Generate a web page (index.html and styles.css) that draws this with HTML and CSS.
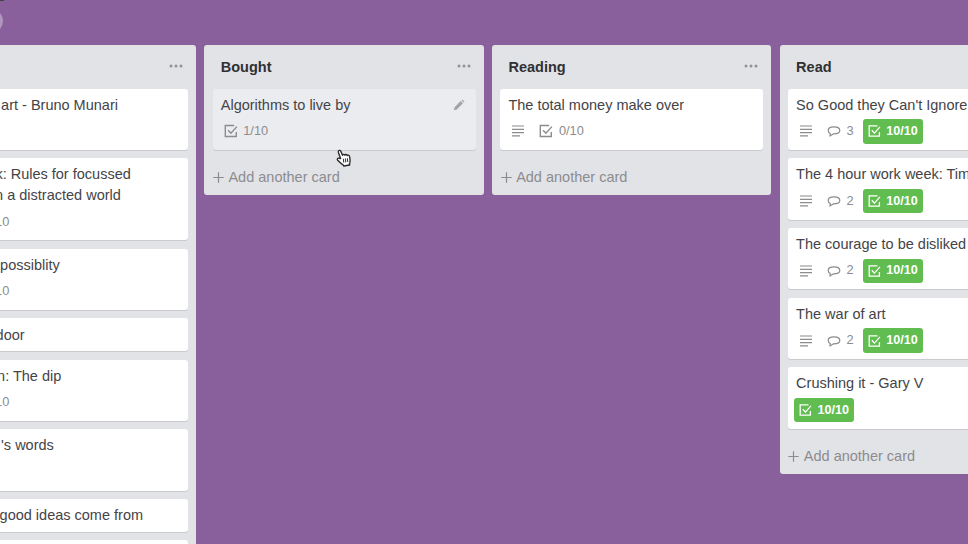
FILE: index.html
```html
<!DOCTYPE html>
<html lang="en">
<head>
<meta charset="utf-8">
<title>Reading board</title>
<link rel="stylesheet" href="styles.css">
</head>
<body>
<svg class="defs" aria-hidden="true">
  <symbol id="check" viewBox="0 0 14 14"><path d="M10.2 1.5H1.3v11h11V8M4.1 6.2l2.8 3.1 6-6.7" fill="none" stroke="currentColor" stroke-width="1.4"/></symbol>
  <symbol id="lines" viewBox="0 0 14 14"><path d="M1 2h12M1 5.3h12M1 8.6h12M1 11.8h8" fill="none" stroke="currentColor" stroke-width="1.2"/></symbol>
  <symbol id="comment" viewBox="0 0 14 14"><path d="M3.3 9.5C1.8 8.8 1.2 7.7 1.2 6.5c0-2.3 2.4-3.6 5.8-3.6s5.8 1.3 5.8 3.6S10.3 9.8 6.6 9.8L2.9 12z" fill="none" stroke="currentColor" stroke-width="1.2" stroke-linejoin="round"/></symbol>
  <symbol id="dots" viewBox="0 0 14 4"><g fill="currentColor"><circle cx="2" cy="2" r="1.5"/><circle cx="7" cy="2" r="1.5"/><circle cx="12" cy="2" r="1.5"/></g></symbol>
  <symbol id="plus" viewBox="0 0 11 11"><path d="M5.5.3v10.4M.3 5.5h10.4" stroke="currentColor" stroke-width="1.2"/></symbol>
</svg>
<header class="topbar"><span class="avatar"></span><span class="speck"></span></header>
<main class="board">
  <section class="list wishlist">
    <header class="list-head"><h2></h2><svg class="dots"><use href="#dots"/></svg></header>
    <article class="card tall"><p class="title">art - Bruno Munari</p></article>
    <article class="card"><p class="title k-line">k: Rules for focussed</p><p class="title n-line">n a distracted world</p><div class="badges"><span class="cut">10</span></div></article>
    <article class="card"><p class="title p-line">possiblity</p><div class="badges"><span class="cut">10</span></div></article>
    <article class="card"><p class="title d-line">door</p></article>
    <article class="card"><p class="title dip-line">n: The dip</p><div class="badges"><span class="cut">10</span></div></article>
    <article class="card tall"><p class="title">'s words</p></article>
    <article class="card"><p class="title g-line">good ideas come from</p></article>
    <article class="card tall"></article>
  </section>

  <section class="list">
    <header class="list-head"><h2>Bought</h2><svg class="dots"><use href="#dots"/></svg></header>
    <article class="card hover">
      <p class="title">Algorithms to live by</p>
      <div class="badges"><span class="badge"><svg><use href="#check"/></svg>1/10</span></div>
      <svg class="pencil" viewBox="0 0 12 12"><path d="M.8 11.2l.8-3L7.7 2.1l2.2 2.2-6.1 6.1zM8.5 1.4l.9-.8 2.1 2.1-.8.8z" fill="currentColor"/></svg>
      <svg class="cursor" viewBox="0 0 16 18"><path d="M4.6 9.6L2.4 3.4C1.8 1.3 4.1.6 4.9 2.4l1.6 3.9c.4-1.2 2-1.2 2.4-.1.6-1 2-.8 2.3.3.8-.8 2.1-.3 2.3.9.5 2.2 1.1 4.4.4 6.3l-.5 1.1.3 1.2-6 1-.6-1.2c-1.6-.8-3.5-2.5-5.4-4.5-1-1.3.1-2.6 1.4-2z" fill="#fff" stroke="#2b2b2e" stroke-width="1.4" stroke-linejoin="round"/><path d="M7.3 9.8l.5 3.8M9.3 9.5l.5 3.8M11.3 9.2l.5 3.8" stroke="#2b2b2e"/></svg>
    </article>
    <footer class="add"><svg><use href="#plus"/></svg>Add another card</footer>
  </section>

  <section class="list">
    <header class="list-head"><h2>Reading</h2><svg class="dots"><use href="#dots"/></svg></header>
    <article class="card">
      <p class="title">The total money make over</p>
      <div class="badges"><span class="badge"><svg><use href="#lines"/></svg></span><span class="badge"><svg><use href="#check"/></svg>0/10</span></div>
    </article>
    <footer class="add"><svg><use href="#plus"/></svg>Add another card</footer>
  </section>

  <section class="list">
    <header class="list-head"><h2>Read</h2></header>
    <article class="card">
      <p class="title">So Good they Can't Ignore</p>
      <div class="badges"><span class="badge"><svg><use href="#lines"/></svg></span><span class="badge"><svg><use href="#comment"/></svg>3</span><span class="badge done"><svg><use href="#check"/></svg>10/10</span></div>
    </article>
    <article class="card">
      <p class="title">The 4 hour work week: Tim</p>
      <div class="badges"><span class="badge"><svg><use href="#lines"/></svg></span><span class="badge"><svg><use href="#comment"/></svg>2</span><span class="badge done"><svg><use href="#check"/></svg>10/10</span></div>
    </article>
    <article class="card">
      <p class="title">The courage to be disliked</p>
      <div class="badges"><span class="badge"><svg><use href="#lines"/></svg></span><span class="badge"><svg><use href="#comment"/></svg>2</span><span class="badge done"><svg><use href="#check"/></svg>10/10</span></div>
    </article>
    <article class="card">
      <p class="title">The war of art</p>
      <div class="badges"><span class="badge"><svg><use href="#lines"/></svg></span><span class="badge"><svg><use href="#comment"/></svg>2</span><span class="badge done"><svg><use href="#check"/></svg>10/10</span></div>
    </article>
    <article class="card">
      <p class="title">Crushing it - Gary V</p>
      <div class="badges"><span class="badge done"><svg><use href="#check"/></svg>10/10</span></div>
    </article>
    <footer class="add"><svg><use href="#plus"/></svg>Add another card</footer>
  </section>
</main>
</body>
</html>
```
FILE: styles.css
```css
* { box-sizing: border-box; }
html { overflow: hidden; }
body {
  margin: 0;
  height: 544px;
  overflow: hidden;
  background: #89609c;
  color: #444447;
  font: 14.5px/20.7px "Liberation Sans", Arial, sans-serif;
}
h2, p { margin: 0; }
.defs { position: absolute; width: 0; height: 0; }
.topbar { position: relative; height: 45px; }
.avatar {
  position: absolute;
  left: -21px;
  top: 9px;
  width: 24px;
  height: 24px;
  border-radius: 50%;
  background: #b097bd;
}
.speck { position: absolute; left: 0; top: 0; width: 4px; height: 1px; background: #43443c; }
.board {
  display: flex;
  align-items: flex-start;
  gap: 8.3px;
  width: 1150px;
  height: 499px;
  overflow: hidden;
  margin-left: -83.3px;
}
.list {
  flex: 0 0 279.3px;
  padding: 0 8.2px;
  background: #e2e3e7;
  border-radius: 3px;
}
.list-head {
  display: flex;
  justify-content: space-between;
  height: 43.5px;
  padding: 11.5px 5px 0 8.2px;
}
.list-head h2 { font-size: 14.5px; line-height: 20.7px; color: #303033; }
.dots { width: 14px; height: 4px; margin-top: 7.3px; color: #929294; }
.card {
  position: relative;
  width: 263px;
  margin-bottom: 8.2px;
  padding: 6.3px 8.2px 6.1px;
  background: #fff;
  border-radius: 3px;
  box-shadow: 0 1px 0 #c9cacd;
}
.card.tall { height: 61.5px; }
.card.hover { background: #ebecf0; }
.title { white-space: nowrap; }
.badges { display: flex; align-items: center; gap: 4px; height: 28.4px; margin-left: -2px; padding-top: 3.6px; }
.badge {
  display: flex;
  align-items: center;
  gap: 5.5px;
  height: 24.5px;
  padding: 0 5px;
  border-radius: 3px;
  color: #8c8c8c;
  font-size: 12.8px;
}
.badge svg { width: 14px; height: 14px; }
.badge.done { background: #61bd4f; color: #fff; font-weight: 700; width: 60px; font-size: 12.6px; }
.add { display: flex; align-items: center; gap: 4.4px; height: 36.9px; padding: 1.5px 0 0 .5px; color: #8c8c8f; }
.add svg { width: 11px; height: 11px; }
.pencil { position: absolute; right: 10.5px; top: 10px; width: 12px; height: 12px; color: #a3a3a6; }
.cursor { position: absolute; left: 123.5px; top: 60px; width: 16px; height: 18px; z-index: 2; }
.wishlist .title { margin-left: 68px; }
.wishlist .k-line { margin-left: 62.3px; }
.wishlist .n-line { margin-left: 62px; }
.wishlist .p-line { margin-left: 67px; }
.wishlist .d-line { margin-left: 62.5px; }
.wishlist .dip-line { margin-left: 64px; }
.wishlist .g-line { margin-left: 66.5px; }
.cut { margin-left: 64px; color: #8c8c8c; font-size: 12.8px; }
```
